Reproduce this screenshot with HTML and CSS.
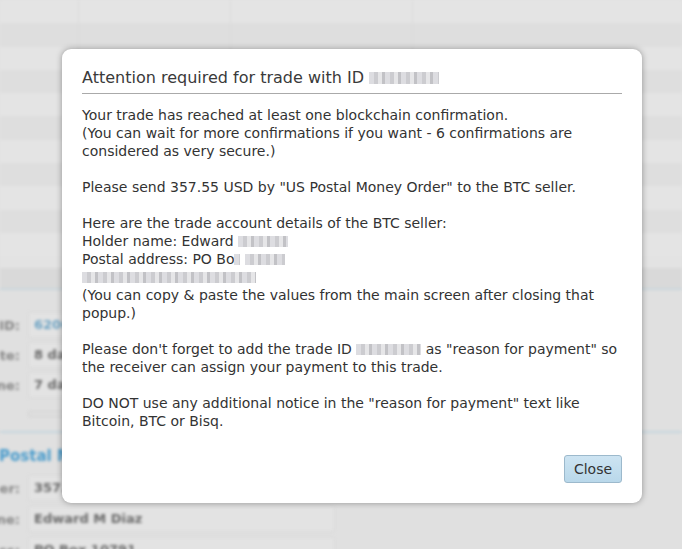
FILE: index.html
```html
<!DOCTYPE html>
<html>
<head>
<meta charset="utf-8">
<link rel="stylesheet" href="styles.css">
</head>
<body>
<div class="page">
  <div class="grid">
    <div class="row"><span class="c c1"></span><span class="c c2"></span><span class="c c3"></span><span class="c c4"></span></div>
    <div class="row alt"><span class="c c1"></span><span class="c c2"></span><span class="c c3"></span><span class="c c4"></span></div>
    <div class="row"><span class="c c1"></span><span class="c c2"></span><span class="c c3"></span><span class="c c4"></span></div>
    <div class="row alt"><span class="c c1"></span><span class="c c2"></span><span class="c c3"></span><span class="c c4"></span></div>
    <div class="row"><span class="c c1"></span><span class="c c2"></span><span class="c c3"></span><span class="c c4"></span></div>
    <div class="row alt"><span class="c c1"></span><span class="c c2"></span><span class="c c3"></span><span class="c c4"></span></div>
    <div class="row"><span class="c c1"></span><span class="c c2"></span><span class="c c3"></span><span class="c c4"></span></div>
    <div class="row alt"><span class="c c1"></span><span class="c c2"></span><span class="c c3"></span><span class="c c4"></span></div>
    <div class="row"><span class="c c1"></span><span class="c c2"></span><span class="c c3"></span><span class="c c4"></span></div>
    <div class="row alt"><span class="c c1"></span><span class="c c2"></span><span class="c c3"></span><span class="c c4"></span></div>
    <div class="row"><span class="c c1"></span><span class="c c2"></span><span class="c c3"></span><span class="c c4"></span></div>
  </div>
  <div class="strip"></div>
  <div class="band"></div>
  <div class="section">
    <div class="frow"><div class="lbl"><span>ID:</span></div><div class="val blue">6206e12a</div></div>
    <div class="frow"><div class="lbl"><span>te:</span></div><div class="val">8 days ago</div></div>
    <div class="frow"><div class="lbl"><span>ne:</span></div><div class="val">7 days</div></div>
    <div class="bar"></div>
  </div>
  <div class="section sec2">
    <div class="head">Postal Money Order</div>
    <div class="frow"><div class="lbl"><span>er:</span></div><div class="val">357.55 USD</div></div>
    <div class="frow"><div class="lbl"><span>ne:</span></div><div class="val">Edward M Diaz</div></div>
    <div class="frow"><div class="lbl"><span>ss:</span></div><div class="val">PO Box 10791</div></div>
  </div>
</div>

<div class="modal">
  <h1 class="title">Attention required for trade with ID <span class="blur bw-title"></span></h1>
  <div class="body">
    <p>Your trade has reached at least one blockchain confirmation.<br>(You can wait for more confirmations if you want - 6 confirmations are considered as very secure.)</p>
    <p>Please send 357.55 USD by "US Postal Money Order" to the BTC seller.</p>
    <p>Here are the trade account details of the BTC seller:<br>Holder name: Edward <span class="blur bw-name"></span><br>Postal address: PO Bo<span class="blur bw-x"></span> <span class="blur bw-box"></span><br><span class="blur bw-city"></span><br>(You can copy &amp; paste the values from the main screen after closing that popup.)</p>
    <p>Please don't forget to add the trade ID <span class="blur bw-id"></span> as "reason for payment" so the receiver can assign your payment to this trade.</p>
    <p>DO NOT use any additional notice in the "reason for payment" text like Bitcoin, BTC or Bisq.</p>
  </div>
  <div class="footer">
    <button class="btn">Close</button>
  </div>
</div>
</body>
</html>
```

FILE: styles.css
```css
html, body {
  margin: 0;
  padding: 0;
  width: 682px;
  height: 549px;
  overflow: hidden;
  background: #e0e0e0;
  font-family: "DejaVu Sans", Verdana, sans-serif;
}

.page {
  filter: blur(1.4px);
  color: #6f6f6f;
  font-size: 13px;
}

.grid {
  display: flex;
  flex-direction: column;
}

.row {
  display: flex;
  height: 23.3px;
  background: #e4e4e4;
}
.row.alt { background: #dedede; }

.c { border-right: 1px solid #d9d9d9; height: 100%; }
.c1 { width: 78px; }
.c2 { width: 151px; }
.c3 { width: 181px; }
.c4 { flex: 1; border-right: 0; }

.strip {
  height: 12px;
  background: #e3e3e3;
}

.band {
  height: 20px;
  background: #d9d9d9;
  border-bottom: 2px solid #c9d6dc;
}

.section {
  display: flex;
  flex-direction: column;
  gap: 6px;
  padding: 23px 0 0;
  height: 143px;
  box-sizing: border-box;
  border-bottom: 2px solid #c6d6de;
}

.frow {
  display: flex;
  align-items: center;
  gap: 8px;
  height: 24px;
}

.lbl {
  width: 20px;
  display: flex;
  justify-content: flex-end;
  white-space: nowrap;
  font-weight: bold;
  color: #858585;
}

.val {
  width: 300px;
  height: 24px;
  line-height: 24px;
  padding-left: 5px;
  background: #e3e3e3;
  border: 1px solid #d8d8d8;
  border-radius: 2px;
  font-weight: bold;
  color: #6a6a6a;
}
.val.blue { color: #6ea4c4; }

.bar {
  margin-left: 28px;
  width: 260px;
  height: 4px;
  border: 1px solid #cfcfcf;
  border-radius: 2px;
  margin-top: 8px;
}

.sec2 {
  border-bottom: 0;
  padding-top: 12px;
  gap: 7px;
}

.head {
  white-space: nowrap;
  font-size: 15px;
  font-weight: bold;
  color: #4a9ccc;
  margin-left: -1px;
  height: 22px;
  line-height: 22px;
  margin-bottom: 2px;
}

/* Modal */
.modal {
  position: absolute;
  left: 62px;
  top: 49px;
  width: 580px;
  box-sizing: border-box;
  padding: 19px 20px 20px;
  background: #fff;
  border-radius: 9px;
  box-shadow: 0 0 6px rgba(0, 0, 0, 0.35);
  color: #333;
}

.title {
  margin: 0;
  font-weight: normal;
  font-size: 16px;
  line-height: 20px;
  padding-bottom: 5px;
  border-bottom: 1px solid #aaa;
  color: #3a3a3a;
}

.body {
  margin-top: 12px;
  font-size: 14px;
  line-height: 18px;
}

.body p { margin: 0 0 18px; }
.body p:last-child { margin-bottom: 0; }

.blur {
  display: inline-block;
  height: 11px;
  vertical-align: -1px;
  background: repeating-linear-gradient(90deg, #d8d8dc 0 5px, #c4c4c8 5px 9px, #e2e2e4 9px 13px, #b8b8bd 13px 16px);
  filter: blur(0.6px);
  opacity: 0.85;
}
.bw-title { width: 70px; height: 12px; }
.bw-name { width: 50px; }
.bw-x { width: 6px; }
.bw-box { width: 40px; }
.bw-city { width: 174px; }
.bw-id { width: 65px; }

.footer {
  display: flex;
  justify-content: flex-end;
  margin-top: 25px;
}

.btn {
  font-family: "DejaVu Sans", Verdana, sans-serif;
  font-size: 14px;
  color: #333;
  width: 58px;
  height: 28px;
  padding: 0;
  background: linear-gradient(#cde4f2, #b9d8ea);
  border: 1px solid #9cb9cc;
  border-radius: 3px;
}
```
